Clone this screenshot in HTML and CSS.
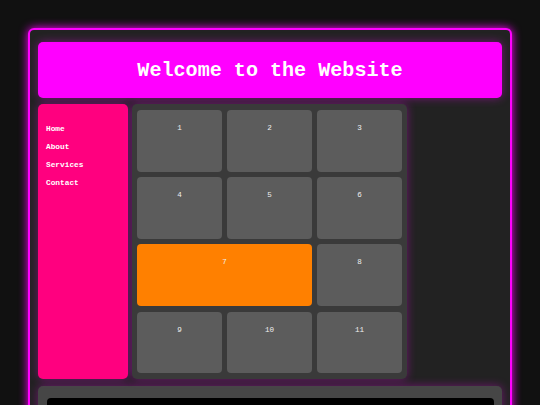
FILE: index.html
```html
<!DOCTYPE html>
<html>
<head>
<meta charset="utf-8">
<link rel="stylesheet" href="styles.css">
</head>
<body>
<div class="container">
  <header class="header"><h1 class="title">Welcome to the Website</h1></header>
  <div class="main">
    <nav class="sidebar">
      <a class="nav-link" href="#">Home</a>
      <a class="nav-link" href="#">About</a>
      <a class="nav-link" href="#">Services</a>
      <a class="nav-link" href="#">Contact</a>
    </nav>
    <div class="grid">
      <div class="cell">1</div>
      <div class="cell">2</div>
      <div class="cell">3</div>
      <div class="cell">4</div>
      <div class="cell">5</div>
      <div class="cell">6</div>
      <div class="cell cell-wide">7</div>
      <div class="cell">8</div>
      <div class="cell">9</div>
      <div class="cell">10</div>
      <div class="cell">11</div>
    </div>
  </div>
  <footer class="footer"><div class="footer-bar"></div></footer>
</div>
</body>
</html>
```
FILE: styles.css
```css
html, body {
  margin: 0;
  padding: 0;
  background: #111111;
  overflow: hidden;
}
body {
  font-family: "Liberation Mono", "DejaVu Sans Mono", monospace;
  color: #ffffff;
  height: 405px;
}
.container {
  margin: 28px 28px 0 28px;
  width: 464px;
  border: 2px solid #ff00ff;
  border-radius: 6px;
  background: #222222;
  box-shadow: 0 0 10px #ff00ff;
  padding: 12px 8px 20px 8px;
}
.header {
  height: 56px;
  background: #ff00ff;
  border-radius: 5px;
  display: flex;
  align-items: center;
  justify-content: center;
  box-shadow: 0 0 10px rgba(255, 0, 255, 0.4);
}
.title {
  margin: 0;
  font-size: 20.1px;
  font-weight: bold;
  color: #ffffff;
}
.main {
  margin-top: 6px;
  display: flex;
  gap: 4px;
  align-items: stretch;
}
.sidebar {
  width: 82px;
  padding: 21px 0 0 8px;
  background: #ff007f;
  border-radius: 5px;
  display: flex;
  flex-direction: column;
  gap: 9px;
  box-shadow: 0 0 10px rgba(255, 0, 255, 0.35);
}
.nav-link {
  color: #ffffff;
  text-decoration: none;
  font-size: 7.8px;
  font-weight: bold;
  line-height: 9px;
}
.grid {
  display: grid;
  grid-template-columns: repeat(3, 85px);
  grid-auto-rows: 61.7px;
  gap: 5.5px 5px;
  padding: 6px 5px 6px 5px;
  background: #3a3a3a;
  border-radius: 5px;
  box-shadow: 0 0 10px rgba(255, 0, 255, 0.35);
}
.cell {
  background: #5c5c5c;
  border-radius: 4px;
  text-align: center;
  font-size: 7.6px;
  line-height: 9px;
  padding-top: 14px;
  box-sizing: border-box;
  color: #eeeeee;
}
.cell-wide {
  grid-column: span 2;
  background: #ff8000;
}
.footer {
  margin-top: 7px;
  background: #464646;
  border-radius: 5px;
  padding: 12px 8px 12px 9px;
  box-shadow: 0 0 10px rgba(255, 0, 255, 0.35);
}
.footer-bar {
  height: 40px;
  background: #000000;
  border-radius: 4px;
}
```
